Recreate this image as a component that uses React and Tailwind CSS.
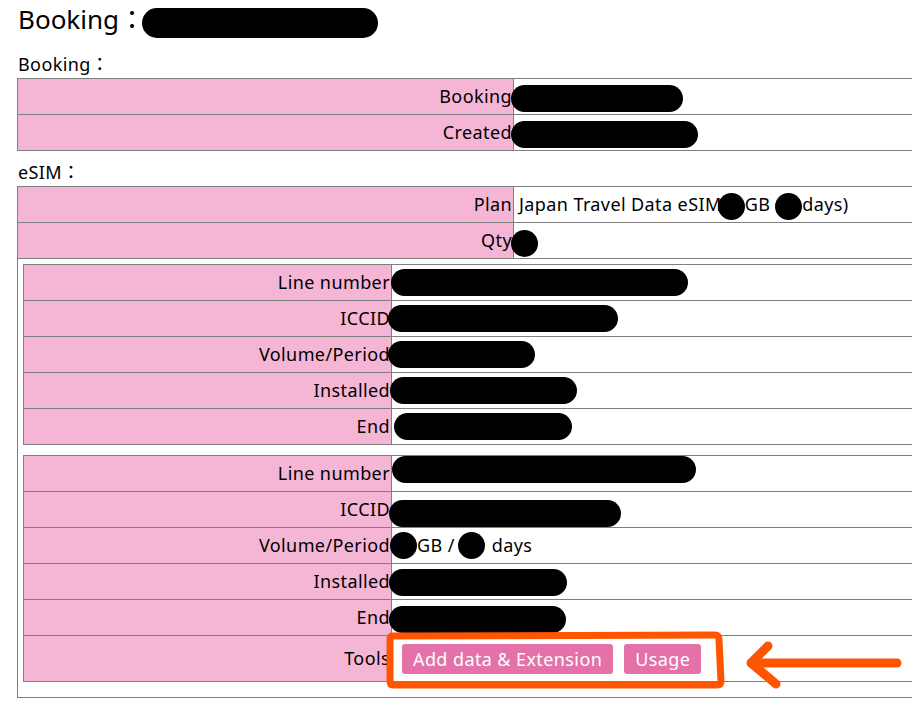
import React from "react";

// redaction pill used where the screenshot hides data
function Blot({ className = "" }) {
  return <span className={`inline-block h-[27px] rounded-full bg-black align-middle ${className}`} />;
}

function Dot({ className = "" }) {
  return <span className={`inline-block h-[27px] w-[27px] rounded-full bg-black align-middle ${className}`} />;
}

function Row({ label, labelWidth, children, tall }) {
  return (
    <div className={`flex border-b border-[#808080] ${tall ? "h-[46px]" : "h-[36px]"}`}>
      <div
        className={`${labelWidth} shrink-0 bg-[#f5b6d6] border-r border-[#808080] flex items-center justify-end pr-[1px]`}
      >
        {label}
      </div>
      <div className="flex-1 flex items-center">{children}</div>
    </div>
  );
}

function LineTable({ rows }) {
  return (
    <div className="border-t border-l border-[#808080] mb-[10px]">
      {rows.map((r) => (
        <Row key={r.label} label={r.label} labelWidth="w-[368px]" tall={r.tall}>
          {r.value}
        </Row>
      ))}
    </div>
  );
}

export default function App() {
  const firstLine = [
    { label: "Line number", value: <Blot className="w-[297px] -ml-[1px]" /> },
    { label: "ICCID", value: <Blot className="w-[230px] -ml-[4px]" /> },
    { label: "Volume/Period", value: <Blot className="w-[147px] -ml-[4px]" /> },
    { label: "Installed", value: <Blot className="w-[187px] -ml-[2px]" /> },
    { label: "End", value: <Blot className="w-[178px] ml-[2px]" /> },
  ];

  const secondLine = [
    { label: "Line number", value: <Blot className="w-[304px] mb-[8px]" /> },
    { label: "ICCID", value: <Blot className="w-[232px] -ml-[3px] mt-[8px]" /> },
    {
      label: "Volume/Period",
      value: (
        <span className="flex items-center">
          <Dot className="-ml-[2px]" />
          <span>GB /</span>
          <Dot className="ml-[3px]" />
          <span className="ml-[7px]">days</span>
        </span>
      ),
    },
    { label: "Installed", value: <Blot className="w-[178px] -ml-[3px] mt-[2px]" /> },
    { label: "End", value: <Blot className="w-[177px] -ml-[3px] mt-[4px]" /> },
    {
      label: "Tools",
      tall: true,
      value: (
        <div className="flex gap-[11px] pl-[10px]">
          <button className="h-[30px] px-[11px] rounded-[3px] bg-[#e472a8] text-white leading-none">
            Add data &amp; Extension
          </button>
          <button className="h-[30px] px-[11px] rounded-[3px] bg-[#e472a8] text-white leading-none">
            Usage
          </button>
        </div>
      ),
    },
  ];

  return (
    <div className="relative w-[912px] h-[707px] overflow-hidden bg-white text-black text-[18px] tracking-[0.4px] font-['Noto_Sans','Noto_Sans_CJK_JP',sans-serif]">
      <div className="h-[52px] pl-[18px] flex items-start">
        <h1 className="text-[26px] leading-[38px] tracking-normal flex items-center">
          Booking：<Blot className="w-[236px] h-[30px] -ml-[3px] mt-[7px]" />
        </h1>
      </div>

      <div className="pl-[17px] w-[960px]">
        <div className="leading-[24px] mb-[2px] pl-[1px]">Booking：</div>
        <div className="border-t border-l border-[#808080]">
          <Row label="Booking" labelWidth="w-[496px]">
            <Blot className="w-[172px] -ml-[3px] mt-[4px]" />
          </Row>
          <Row label="Created" labelWidth="w-[496px]">
            <Blot className="w-[187px] -ml-[3px] mt-[4px]" />
          </Row>
        </div>

        <div className="leading-[24px] mt-[9px] mb-[2px] pl-[1px]">eSIM：</div>
        <div className="border-t border-l border-b border-[#808080]">
          <Row label="Plan" labelWidth="w-[496px]">
            <span className="flex items-center pl-[5px]">
              Japan Travel Data eSIM
              <Dot className="-ml-[4px] mt-[4px]" />
              <span>GB</span>
              <Dot className="ml-[5px] mt-[4px]" />
              <span>days)</span>
            </span>
          </Row>
          <Row label="Qty" labelWidth="w-[496px]">
            <Dot className="-ml-[3px] mt-[6px]" />
          </Row>
          <div className="pt-[5px] pl-[5px] pb-[5px]">
            <LineTable rows={firstLine} />
            <LineTable rows={secondLine} />
          </div>
        </div>
      </div>

      {/* hand drawn annotation */}
      <svg className="absolute left-0 top-0 pointer-events-none" width="912" height="707">
        <path
          d="M392 636 L715 635 Q719 635 719 640 L721 681 Q721 685 717 685 L393 685 Q390 685 390 681 L390 640 Q390 636 392 636 Z"
          fill="none"
          stroke="#ff5500"
          strokeWidth="7"
          strokeLinejoin="round"
        />
        <path d="M752 663 L897 663" stroke="#ff5500" strokeWidth="9" strokeLinecap="round" fill="none" />
        <path
          d="M768 646 L751 663 L776 684"
          stroke="#ff5500"
          strokeWidth="9"
          strokeLinecap="round"
          strokeLinejoin="round"
          fill="none"
        />
      </svg>
    </div>
  );
}
